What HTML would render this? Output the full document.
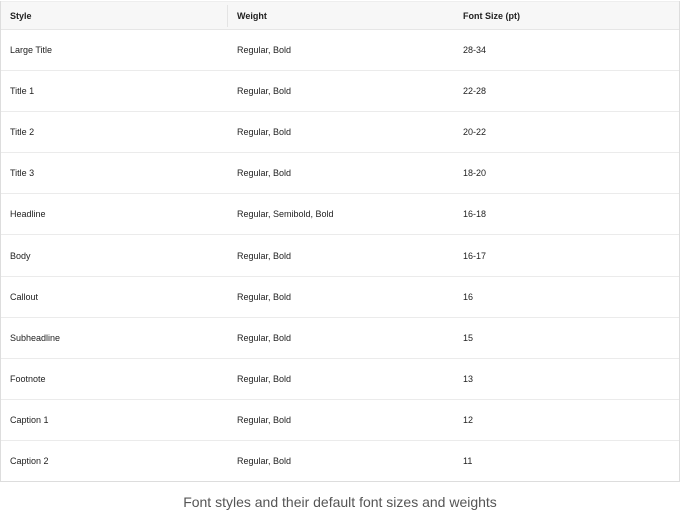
<!DOCTYPE html>
<html><head><style>
body{margin:0;width:680px;height:512px;background:#fff;font-family:"Liberation Sans",sans-serif;overflow:hidden}
.t{position:absolute;left:0;top:1px;width:678px;border:1px solid #ddd;border-top:none}
.r{height:40.1px;border-bottom:1px solid #ebebeb;position:relative;font-size:9px;color:#222}
.r:last-child{border-bottom:none}
.h{height:27px;background:#f7f7f7;font-weight:bold;border-bottom:1px solid #e6e6e6;border-top:1px solid #eee}
.r span{position:absolute;top:50%;transform:translateY(-50%)}
.a{left:9px}.b{left:236px}.c{left:462px}
.h .b::before{content:"";position:absolute;left:-10px;top:-6px;height:22px;border-left:1px solid #e4e4e4}
.cap{position:absolute;top:494px;left:0;width:680px;text-align:center;font-size:14px;color:#555}
</style></head><body>
<div class="t">
<div class="r h"><span class="a">Style</span><span class="b">Weight</span><span class="c">Font Size (pt)</span></div>
<div class="r"><span class="a">Large Title</span><span class="b">Regular, Bold</span><span class="c">28-34</span></div>
<div class="r"><span class="a">Title 1</span><span class="b">Regular, Bold</span><span class="c">22-28</span></div>
<div class="r"><span class="a">Title 2</span><span class="b">Regular, Bold</span><span class="c">20-22</span></div>
<div class="r"><span class="a">Title 3</span><span class="b">Regular, Bold</span><span class="c">18-20</span></div>
<div class="r"><span class="a">Headline</span><span class="b">Regular, Semibold, Bold</span><span class="c">16-18</span></div>
<div class="r"><span class="a">Body</span><span class="b">Regular, Bold</span><span class="c">16-17</span></div>
<div class="r"><span class="a">Callout</span><span class="b">Regular, Bold</span><span class="c">16</span></div>
<div class="r"><span class="a">Subheadline</span><span class="b">Regular, Bold</span><span class="c">15</span></div>
<div class="r"><span class="a">Footnote</span><span class="b">Regular, Bold</span><span class="c">13</span></div>
<div class="r"><span class="a">Caption 1</span><span class="b">Regular, Bold</span><span class="c">12</span></div>
<div class="r"><span class="a">Caption 2</span><span class="b">Regular, Bold</span><span class="c">11</span></div>
</div>
<div class="cap">Font styles and their default font sizes and weights</div>
</body></html>
